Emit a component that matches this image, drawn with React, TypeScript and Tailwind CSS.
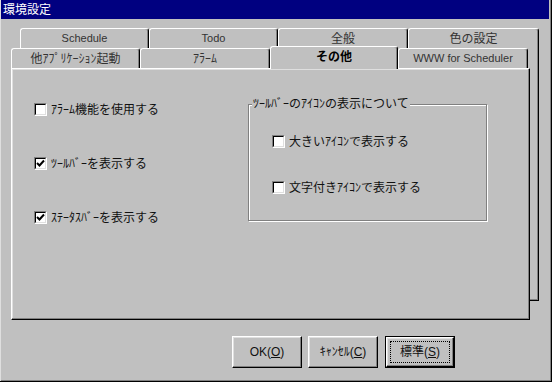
import React from 'react';

const font = { fontFamily: '"Liberation Sans", "Noto Sans CJK JP", sans-serif' };

const CheckMark = () => (
  <svg width="9" height="9" viewBox="0 0 9 9" className="block">
    <path d="M1 4 L3.5 6.5 L8 1.5" fill="none" stroke="#000" strokeWidth="2" />
  </svg>
);

const CheckBox = ({ label, checked }: { label: string; checked?: boolean }) => (
  <div className="flex items-center h-[13px] gap-[4px]">
    <div className="w-[13px] h-[13px] border border-t-[#808080] border-l-[#808080] border-b-white border-r-white">
      <div className="w-full h-full bg-white border border-t-black border-l-black border-b-[#dfdfdf] border-r-[#dfdfdf] flex items-center justify-center">
        {checked && <CheckMark />}
      </div>
    </div>
    <span className="text-[12px] leading-none text-[#111] whitespace-nowrap">{label}</span>
  </div>
);

const Tab = ({ label, className, selected }: { label: string; className: string; selected?: boolean }) => (
  <div
    className={`${className} flex items-center justify-center bg-[#c0c0c0] rounded-t-[3px] border-t border-l border-r border-t-white border-l-white border-r-black shadow-[inset_-1px_0_0_#808080] whitespace-nowrap ${
      selected ? 'h-[23px] font-bold text-black relative z-10 translate-y-px pb-[2px]' : 'h-[20px] text-[#333]'
    }`}
  >
    {label}
  </div>
);

const Button = ({ children, isDefault }: { children: React.ReactNode; isDefault?: boolean }) => (
  <div className={`w-[70px] h-[32px] ${isDefault ? 'border border-black' : ''}`}>
    <div className="w-full h-full bg-[#c0c0c0] border border-t-white border-l-white border-b-black border-r-black shadow-[inset_-1px_-1px_0_#808080,inset_1px_1px_0_#dfdfdf] flex items-center justify-center p-[3px]">
      <div className={`w-full h-full flex items-center justify-center text-[12px] text-[#111] ${isDefault ? 'border border-dotted border-black' : ''}`}>
        {children}
      </div>
    </div>
  </div>
);

export default function App() {
  return (
    <div
      className="w-[552px] h-[382px] bg-[#c0c0c0] pr-[3px] pl-[1px] shadow-[inset_-1px_-1px_0_#000,inset_1px_0_0_#dfdfdf,inset_-2px_-2px_0_#808080] overflow-hidden"
      style={font}
    >
      {/* Title bar */}
      <div className="h-[19px] bg-[#000080] flex items-center pl-[2px] text-white text-[12px] leading-none">環境設定</div>

      {/* Tabs + panel */}
      <div className="relative z-0 mt-[10px]">
        <div className="absolute left-[19px] top-[19px] w-[519px] h-[253px] -z-10 bg-[#c0c0c0] border-r border-b border-black shadow-[inset_-1px_-1px_0_#808080]" />

        <div className="flex pl-[19px] h-[19px] items-end text-[11px]">
          <Tab label="Schedule" className="w-[129px]" />
          <Tab label="Todo" className="w-[129px]" />
          <Tab label="全般" className="w-[130px] text-[12px]" />
          <Tab label="色の設定" className="w-[131px] text-[12px]" />
        </div>

        <div className="flex pl-[10px] h-[20px] items-end text-[12px]">
          <Tab label="他ｱﾌﾟﾘｹｰｼｮﾝ起動" className="w-[129px]" />
          <Tab label="ｱﾗｰﾑ" className="w-[130px]" />
          <Tab label="その他" className="w-[128px]" selected />
          <Tab label="WWW for Scheduler" className="w-[130px] text-[11px]" />
        </div>

        <div className="ml-[10px] w-[519px] h-[252px] bg-[#c0c0c0] border border-t-white border-l-white border-b-black border-r-black shadow-[inset_-1px_-1px_0_#808080,inset_1px_1px_0_#dfdfdf] pl-[22px] pt-[34px] flex items-start">
          <div className="w-[214px] flex flex-col gap-[41px]">
            <CheckBox label="ｱﾗｰﾑ機能を使用する" />
            <CheckBox label="ﾂｰﾙﾊﾞｰを表示する" checked />
            <CheckBox label="ｽﾃｰﾀｽﾊﾞｰを表示する" checked />
          </div>

          <div className="relative mt-[1px] w-[239px] h-[117px] border border-[#808080] shadow-[1px_1px_0_#fff,inset_1px_1px_0_#fff] pl-[23px] pt-[30px] flex flex-col gap-[33px]">
            <span className="absolute -top-[7px] left-[3px] bg-[#c0c0c0] px-[1px] text-[12px] leading-[12px] text-[#111] whitespace-nowrap">
              ﾂｰﾙﾊﾞｰのｱｲｺﾝの表示について
            </span>
            <CheckBox label="大きいｱｲｺﾝで表示する" />
            <CheckBox label="文字付きｱｲｺﾝで表示する" />
          </div>
        </div>
      </div>

      {/* Buttons */}
      <div className="flex mt-[16px] pl-[231px] gap-[6px]">
        <Button>
          OK(<span className="underline">O</span>)
        </Button>
        <Button>
          ｷｬﾝｾﾙ(<span className="underline">C</span>)
        </Button>
        <div className="ml-[1px]">
          <Button isDefault>
            標準(<span className="underline">S</span>)
          </Button>
        </div>
      </div>
    </div>
  );
}
